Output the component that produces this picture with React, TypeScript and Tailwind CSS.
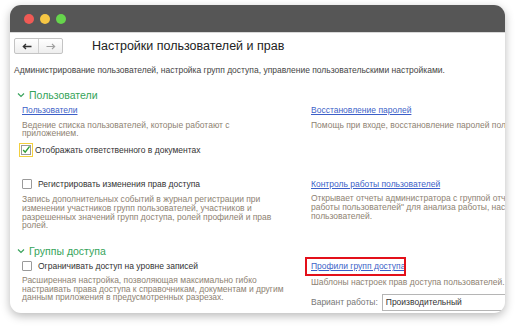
import * as React from "react";

const font = { fontFamily: '"Liberation Sans", Arial, sans-serif' };

const Chevron = () => (
  <svg width="8" height="6" viewBox="0 0 8 6" className="mr-[4px] mt-[1px]">
    <path d="M1 1.5 L4 4.5 L7 1.5" fill="none" stroke="#3aa35c" strokeWidth="1.2" />
  </svg>
);

const Heading = ({ children }: { children: React.ReactNode }) => (
  <div className="flex items-center pl-[7px] text-[10.5px] leading-[14px] text-[#35a45a]">
    <Chevron />
    {children}
  </div>
);

const Link = ({ children }: { children: React.ReactNode }) => (
  <div className="text-[8.5px] leading-[12px] text-[#3c5fc8] underline">{children}</div>
);

const Desc = ({ children }: { children: React.ReactNode }) => (
  <div className="text-[8.5px] leading-[8.7px] text-[#8e8272] whitespace-nowrap">{children}</div>
);

const Box = ({ checked }: { checked?: boolean }) =>
  checked ? (
    <span className="flex h-[14px] w-[14px] items-center justify-center border border-[#f2cf3e] bg-white">
      <span className="flex h-[10px] w-[10px] items-center justify-center border border-[#9a9a9a]">
        <svg width="10" height="10" viewBox="0 0 10 10">
          <path d="M1.5 5 L4 7.8 L9.5 0.5" fill="none" stroke="#2f9e3a" strokeWidth="1.8" />
        </svg>
      </span>
    </span>
  ) : (
    <span className="h-[10px] w-[10px] rounded-[1px] border border-[#9a9a9a] bg-white" />
  );

export default function App() {
  return (
    <div className="h-[329px] w-[515px] bg-white pl-[10px] pt-[5px]" style={font}>
      <div className="flex h-[308px] w-[495px] flex-col overflow-hidden rounded-[11px] bg-white shadow-[0_3px_10px_rgba(0,0,0,0.28)]">
        <div className="flex h-[28px] shrink-0 items-center gap-[6px] border-b border-[#d8d8d8] bg-[#565656] pl-[14px]">
          <span className="h-[10px] w-[10px] rounded-full bg-[#f05a55]" />
          <span className="h-[10px] w-[10px] rounded-full bg-[#f6c644]" />
          <span className="h-[10px] w-[10px] rounded-full bg-[#66d54c]" />
        </div>

        <div className="flex flex-col">
          <div className="mt-[4px] flex items-center pl-[4px]">
            <div className="flex h-[16px] w-[49px] rounded-[2px] border border-[#c4c4c4] bg-gradient-to-b from-white to-[#eeeeee]">
              <div className="flex flex-1 items-center justify-center border-r border-[#d0d0d0]">
                <svg width="10" height="7" viewBox="0 0 10 7">
                  <path d="M9.5 3.5 H1.5 M4 1 L1.3 3.5 L4 6" fill="none" stroke="#333" strokeWidth="1.3" />
                </svg>
              </div>
              <div className="flex flex-1 items-center justify-center">
                <svg width="10" height="7" viewBox="0 0 10 7">
                  <path d="M0.5 3.5 H8.5 M6 1 L8.7 3.5 L6 6" fill="none" stroke="#a0a0a0" strokeWidth="1.1" />
                </svg>
              </div>
            </div>
            <div className="ml-[29px] text-[12.5px] text-[#222]">Настройки пользователей и прав</div>
          </div>

          <div className="mt-[9px] pl-[4px] text-[8.5px] leading-[10px] text-[#444]">
            Администрирование пользователей, настройка групп доступа, управление пользовательскими настройками.
          </div>

          <div className="mt-[13px]">
            <Heading>Пользователи</Heading>
          </div>

          <div className="mt-[2px] grid grid-cols-[289px_260px] pl-[12px]">
            <div className="flex flex-col">
              <Link>Пользователи</Link>
              <div className="mt-[5px]">
                <Desc>
                  Ведение списка пользователей, которые работают с
                  <br />
                  приложением.
                </Desc>
              </div>
              <div className="mt-[5px] flex items-center -ml-[3px] text-[8.5px] text-[#333]">
                <Box checked />
                <span className="ml-[2px]">Отображать ответственного в документах</span>
              </div>
            </div>
            <div className="flex flex-col">
              <Link>Восстановление паролей</Link>
              <div className="mt-[5px]">
                <Desc>Помощь при входе, восстановление паролей пользователей.</Desc>
              </div>
            </div>
          </div>

          <div className="mt-[21px] grid grid-cols-[289px_260px] pl-[12px]">
            <div className="flex flex-col">
              <div className="flex items-center text-[8.5px] leading-[12px] text-[#333]">
                <Box />
                <span className="ml-[6px]">Регистрировать изменения прав доступа</span>
              </div>
              <div className="mt-[5px]">
                <Desc>
                  Запись дополнительных событий в журнал регистрации при
                  <br />
                  изменении участников групп пользователей, участников и
                  <br />
                  разрешенных значений групп доступа, ролей профилей и прав
                  <br />
                  ролей.
                </Desc>
              </div>
            </div>
            <div className="flex flex-col">
              <Link>Контроль работы пользователей</Link>
              <div className="mt-[4px]">
                <Desc>
                  Открывает отчеты администратора с группой отчетов "Контроль
                  <br />
                  работы пользователей" для анализа работы, настроек и прав
                  <br />
                  пользователей.
                </Desc>
              </div>
            </div>
          </div>

          <div className="mt-[14px]">
            <Heading>Группы доступа</Heading>
          </div>

          <div className="mt-[2px] grid grid-cols-[289px_260px] pl-[12px]">
            <div className="flex flex-col">
              <div className="flex items-center text-[8.5px] leading-[12px] text-[#333]">
                <Box />
                <span className="ml-[6px]">Ограничивать доступ на уровне записей</span>
              </div>
              <div className="mt-[4px]">
                <Desc>
                  Расширенная настройка, позволяющая максимально гибко
                  <br />
                  настраивать права доступа к справочникам, документам и другим
                  <br />
                  данным приложения в предусмотренных разрезах.
                </Desc>
              </div>
            </div>
            <div className="flex flex-col">
              <div className="relative">
                <Link>Профили групп доступа</Link>
                <span className="absolute left-[-6px] top-[-3px] h-[19px] w-[101px] border-2 border-[#e3101a]" />
              </div>
              <div className="mt-[6px]">
                <Desc>Шаблоны настроек прав доступа пользователей.</Desc>
              </div>
              <div className="mt-[7px] flex items-center">
                <span className="text-[8.5px] text-[#777]">Вариант работы:</span>
                <div className="ml-[4px] flex h-[17px] w-[160px] items-center border border-[#b5b5b5] pl-[3px] text-[8.5px] text-[#333]">
                  Производительный
                </div>
              </div>
            </div>
          </div>
        </div>
      </div>
    </div>
  );
}
